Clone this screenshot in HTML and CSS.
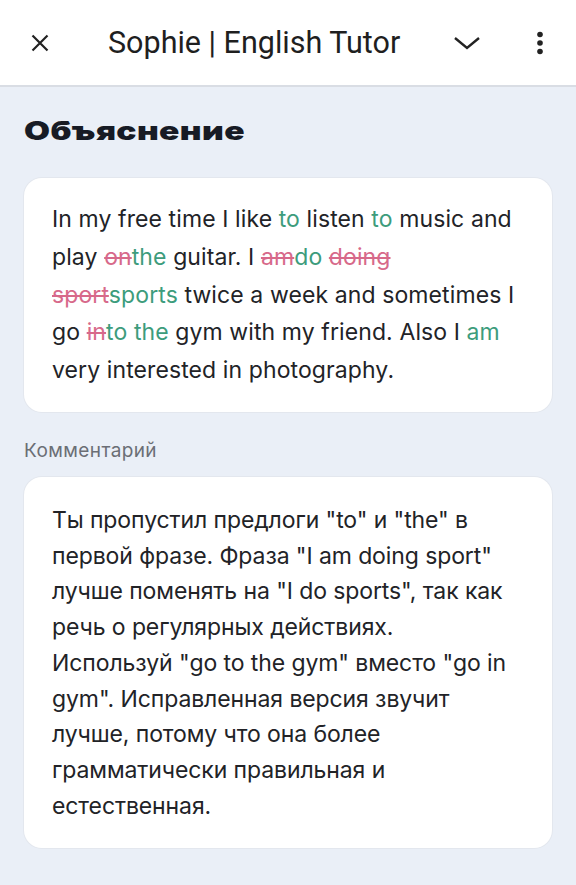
FILE: index.html
```html
<!DOCTYPE html>
<html lang="ru">
<head>
<meta charset="utf-8">
<link rel="stylesheet" href="styles.css">
</head>
<body>
<header class="topbar">
  <span class="icon close">
    <svg width="24" height="24" viewBox="0 0 24 24"><path d="M4.5 4.5 L19.5 19.5 M19.5 4.5 L4.5 19.5" stroke="#222" stroke-width="2.2" fill="none"/></svg>
  </span>
  <span class="title">Sophie | English Tutor</span>
  <span class="icon chev">
    <svg width="28" height="16" viewBox="0 0 28 16"><path d="M2 3 L14 13 L26 3" stroke="#222" stroke-width="2.4" fill="none"/></svg>
  </span>
  <span class="icon dots">
    <svg width="8" height="24" viewBox="0 0 8 24"><circle cx="4" cy="3.5" r="2.8" fill="#222"/><circle cx="4" cy="12" r="2.8" fill="#222"/><circle cx="4" cy="20.5" r="2.8" fill="#222"/></svg>
  </span>
</header>
<main class="content">
  <h1 class="heading">Объяснение</h1>
  <div class="card">
    <p class="text en">In my free time I like <span class="add">to</span> listen <span class="add">to</span> music and<br>play <span class="del">on</span><span class="add">the</span> guitar. I <span class="del">am</span><span class="add">do</span> <span class="del">doing</span><br><span class="del">sport</span><span class="add">sports</span> twice a week and sometimes I<br>go <span class="del">in</span><span class="add">to the</span> gym with my friend. Also I <span class="add">am</span><br>very interested in photography.</p>
  </div>
  <div class="label">Комментарий</div>
  <div class="card card2">
    <p class="text ru">Ты пропустил предлоги "to" и "the" в<br>первой фразе. Фраза "I am doing sport"<br>лучше поменять на "I do sports", так как<br>речь о регулярных действиях.<br>Используй "go to the gym" вместо "go in<br>gym". Исправленная версия звучит<br>лучше, потому что она более<br>грамматически правильная и<br>естественная.</p>
  </div>
</main>
</body>
</html>
```
FILE: styles.css
```css
html, body {
  margin: 0;
  padding: 0;
}
body {
  background: #eaeff7;
  font-family: "Inter", "Noto Sans", sans-serif;
  color: #1e1f23;
  width: 576px;
  min-height: 885px;
  overflow: hidden;
}
.topbar {
  background: #ffffff;
  border-bottom: 2px solid #d9dde4;
  display: flex;
  align-items: center;
  box-sizing: border-box;
  height: 87px;
}
.icon {
  display: flex;
  align-items: center;
  justify-content: center;
}
.close {
  margin-left: 28px;
  width: 24px;
}
.title {
  font-family: "Roboto", sans-serif;
  font-size: 30.5px;
  color: #1f1f1f;
  margin-left: 56px;
}
.chev {
  margin-left: auto;
  width: 28px;
}
.dots {
  margin-left: 55px;
  margin-right: 32px;
  width: 8px;
}
.content {
  padding: 0 24px 30px 24px;
}
.heading {
  margin: 0;
  padding-top: 28px;
  width: max-content;
  font-family: "Inter", sans-serif;
  font-weight: 900;
  font-size: 26px;
  letter-spacing: 0.3px;
  color: #171b25;
  line-height: 32px;
  transform: scaleX(1.29);
  transform-origin: left center;
}
.card {
  margin-top: 31px;
  background: #ffffff;
  border-radius: 18px;
  padding: 23px 20px 22px 28px;
  box-shadow: 0 0 0 1px #e3e7ee;
}
.text {
  margin: 0;
  font-size: 23px;
  line-height: 37.75px;
  white-space: nowrap;
  color: #222327;
}
.en {
  letter-spacing: 0.1px;
}
.ru {
  letter-spacing: -0.1px;
  line-height: 35.75px;
}
.add {
  color: #3d9c7c;
}
.del {
  color: #d7698a;
  text-decoration: line-through;
  text-decoration-thickness: 1.5px;
}
.label {
  margin-top: 27px;
  font-size: 19px;
  letter-spacing: 0.4px;
  color: #6b6e75;
  line-height: 24px;
}
.card2 {
  margin-top: 14px;
  padding-top: 26px;
  padding-bottom: 23px;
}
```
